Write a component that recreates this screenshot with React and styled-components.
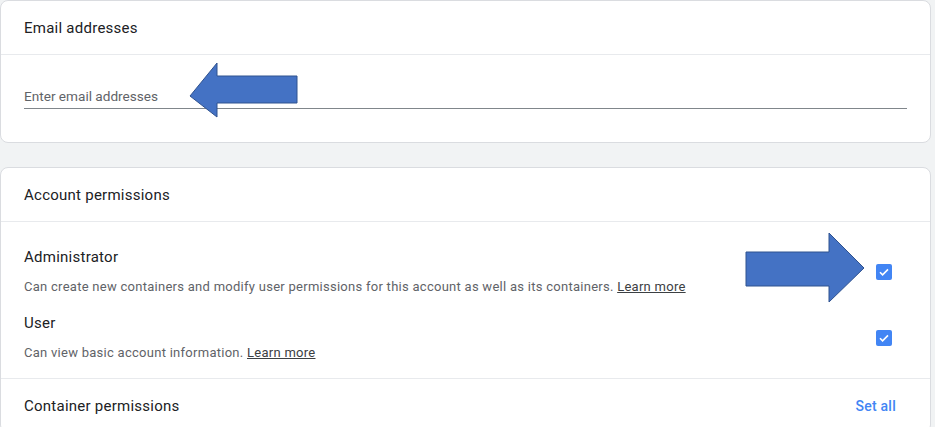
import styled, { createGlobalStyle } from "styled-components";

const Global = createGlobalStyle`
  body {
    margin: 0;
    background: #f1f3f4;
    font-family: Roboto, "Noto Sans", Arial, sans-serif;
    color: #202124;
  }
`;

const Page = styled.div`
  display: flex;
  flex-direction: column;
  gap: 24px;
  padding: 0 4px 0 0;
  height: 427px;
  overflow: hidden;
`;

const Card = styled.section`
  position: relative;
  background: #fff;
  border: 1px solid #dadce0;
  border-radius: 8px;
`;

const CardHeader = styled.div`
  height: 53px;
  display: flex;
  align-items: center;
  justify-content: space-between;
  padding: 0 38px 0 23px;
  font-size: 15px;
  letter-spacing: 0.25px;
  border-bottom: ${(p) => (p.$flat ? "none" : "1px solid #e8eaed")};
`;

const CardBody = styled.div`
  padding: 24px 23px 33px;
`;

const EmailInput = styled.input`
  width: 100%;
  box-sizing: border-box;
  height: 30px;
  border: none;
  border-bottom: 1px solid #80868b;
  outline: none;
  padding: 4px 0 0;
  font-family: inherit;
  font-size: 13.6px;
  color: #202124;
  &::placeholder {
    color: #5f6368;
  }
`;

const Rows = styled.div`
  display: flex;
  flex-direction: column;
  gap: 15px;
  padding: 24px 38px 15px 23px;
  border-bottom: 1px solid #e8eaed;
`;

const Row = styled.div`
  display: flex;
  align-items: center;
  justify-content: space-between;
`;

const RowText = styled.div`
  display: flex;
  flex-direction: column;
  gap: 9px;
`;

const RowTitle = styled.div`
  font-size: 15px;
  line-height: 22px;
  letter-spacing: 0.25px;
`;

const RowDesc = styled.div`
  font-size: 13px;
  line-height: 20px;
  letter-spacing: 0.27px;
  color: #5f6368;
  a {
    color: #3c4043;
    text-decoration: underline;
  }
`;

const Check = styled.span`
  width: 16px;
  height: 16px;
  border-radius: 2px;
  background: #4285f4;
  display: flex;
  align-items: center;
  justify-content: center;
`;

const SetAll = styled.a`
  color: #4285f4;
  font-size: 14px;
  font-weight: 500;
  text-decoration: none;
  margin-right: -4px;
`;

const Arrow = styled.svg`
  position: absolute;
  left: ${(p) => p.$x}px;
  top: ${(p) => p.$y}px;
  overflow: visible;
`;

function Checkbox() {
  return (
    <Check>
      <svg width="12" height="12" viewBox="0 0 12 12">
        <path d="M2 6.2l2.6 2.6L10 3.4" fill="none" stroke="#fff" strokeWidth="1.6" />
      </svg>
    </Check>
  );
}

const permissions = [
  {
    title: "Administrator",
    desc: "Can create new containers and modify user permissions for this account as well as its containers.",
  },
  { title: "User", desc: "Can view basic account information." },
];

export default function App() {
  return (
    <>
      <Global />
      <Page>
        <Card>
          <CardHeader>Email addresses</CardHeader>
          <CardBody>
            <EmailInput placeholder="Enter email addresses" />
          </CardBody>
          <Arrow $x={189} $y={62} width="108" height="55">
            <polygon
              points="0,33 27,0 27,13 107,13 107,40 27,40 27,54"
              fill="#4472c4"
              stroke="#2f528f"
              strokeWidth="1"
            />
          </Arrow>
        </Card>
        <Card>
          <CardHeader>Account permissions</CardHeader>
          <Rows>
            {permissions.map((p) => (
              <Row key={p.title}>
                <RowText>
                  <RowTitle>{p.title}</RowTitle>
                  <RowDesc>
                    {p.desc} <a href="#">Learn more</a>
                  </RowDesc>
                </RowText>
                <Checkbox />
              </Row>
            ))}
          </Rows>
          <CardHeader $flat>
            Container permissions
            <SetAll href="#">Set all</SetAll>
          </CardHeader>
          <Arrow $x={745} $y={65} width="119" height="70">
            <polygon
              points="0,19 83,19 83,0 118,35 83,69 83,53 0,53"
              fill="#4472c4"
              stroke="#2f528f"
              strokeWidth="1"
            />
          </Arrow>
        </Card>
      </Page>
    </>
  );
}
